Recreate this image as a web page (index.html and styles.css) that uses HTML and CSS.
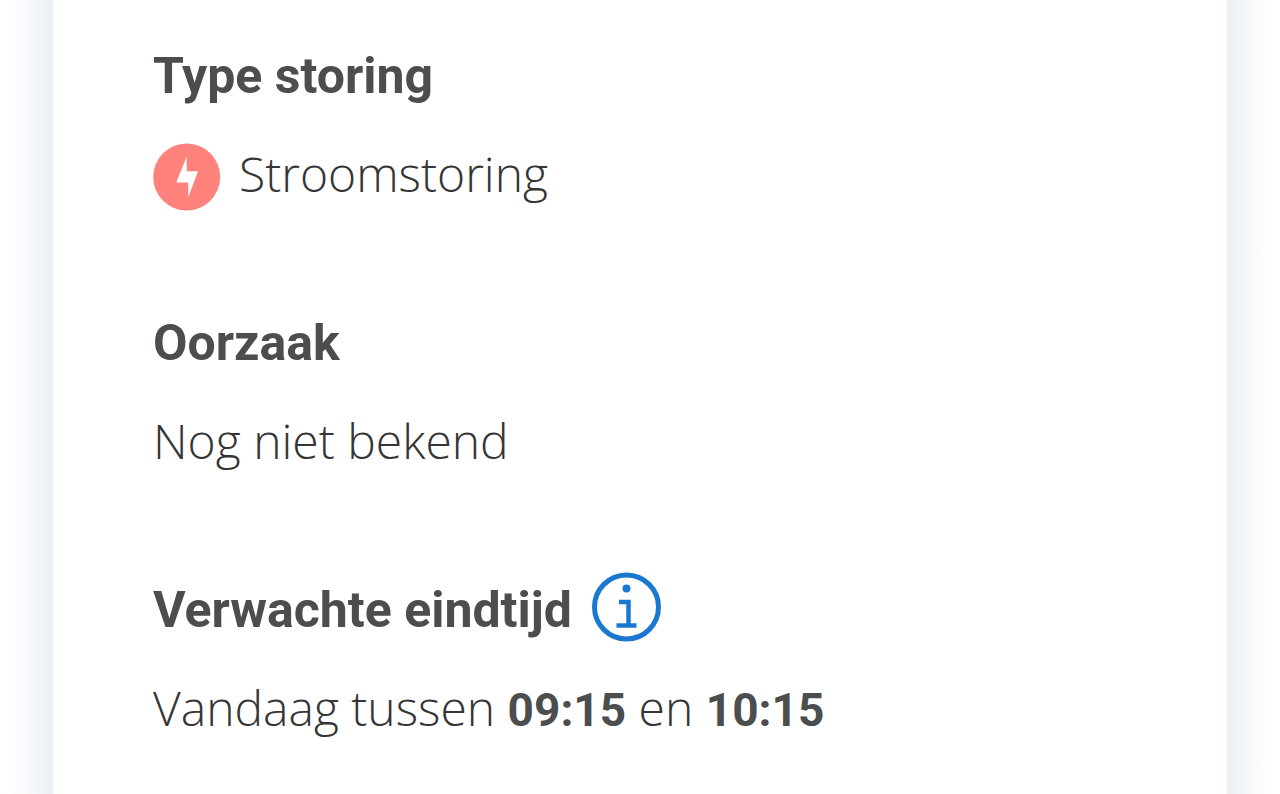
FILE: index.html
```html
<!DOCTYPE html>
<html lang="nl">
<head>
<meta charset="utf-8">
<meta name="viewport" content="width=device-width, initial-scale=1">
<title>Stroomstoring</title>
<link rel="stylesheet" href="styles.css">
</head>
<body>
<main class="card">
  <section class="detail">
    <h2 class="label">Type storing</h2>
    <p class="value value-icon">
      <svg class="icon" viewBox="0 0 68 68" aria-hidden="true"><circle cx="33.700" cy="35" r="33.500" fill="#ff827c"/><path d="M33.700 14.500V29.300H45L35.200 55.500V40.500H23.200Z" fill="#fff"/></svg>
      <span>Stroomstoring</span>
    </p>
  </section>
  <section class="detail">
    <h2 class="label">Oorzaak</h2>
    <p class="value">Nog niet bekend</p>
  </section>
  <section class="detail">
    <div class="heading">
      <h2 class="label">Verwachte eindtijd</h2>
      <button class="info" type="button" aria-label="Meer informatie">
        <svg class="icon" viewBox="0 0 68 68" aria-hidden="true"><circle cx="34.500" cy="34" r="32" fill="none" stroke="#1b78d0" stroke-width="5"/><circle cx="34.500" cy="15.500" r="4" fill="#1b78d0"/><path d="M27 29H36.500V52.500M24.500 52.500H44.500" fill="none" stroke="#1b78d0" stroke-width="4.500"/></svg>
      </button>
    </div>
    <p class="value">Vandaag tussen <strong>09:15</strong> en <strong>10:15</strong></p>
  </section>
</main>
</body>
</html>
```
FILE: styles.css
```css
* {
  box-sizing: border-box;
}

body {
  margin: 0;
  padding: 0 53px;
  background:
    linear-gradient(to left, #fff 10%, #f9fbfc 50%, #e9eff5) right / 53px 100% no-repeat,
    linear-gradient(to right, #fff 10%, #f9fbfc 50%, #e9eff5) left / 53px 100% no-repeat,
    #fff;
  color: #4c4d4d;
  font-family: Roboto, "Liberation Sans", sans-serif;
}

.card {
  display: flex;
  flex-direction: column;
  gap: 99px;
  min-height: 100vh;
  padding: 42px 100px 50px;
  background: #fff;
}

.detail {
  display: flex;
  flex-direction: column;
  gap: 32px;
}

.label,
.value {
  margin: 0;
}

.label {
  font-size: 50px;
  font-weight: 700;
  line-height: 68px;
}

.value {
  min-height: 68px;
  font-family: "Open Sans", Roboto, sans-serif;
  font-size: 48px;
  font-weight: 300;
  line-height: 64px;
  color: #353535;
}

.value strong {
  font-family: Roboto, sans-serif;
  font-size: 46px;
  font-weight: 700;
  color: #4c4d4d;
}

.value-icon {
  display: flex;
  align-items: flex-start;
  gap: 18px;
}

.heading {
  display: flex;
  align-items: flex-start;
  gap: 20px;
}

.icon {
  display: block;
  flex: none;
  width: 68px;
  height: 68px;
  overflow: visible;
}

.info {
  margin: -3px 0 3px;
  padding: 0;
  border: 0;
  border-radius: 50%;
  background: none;
  cursor: pointer;
}
```
